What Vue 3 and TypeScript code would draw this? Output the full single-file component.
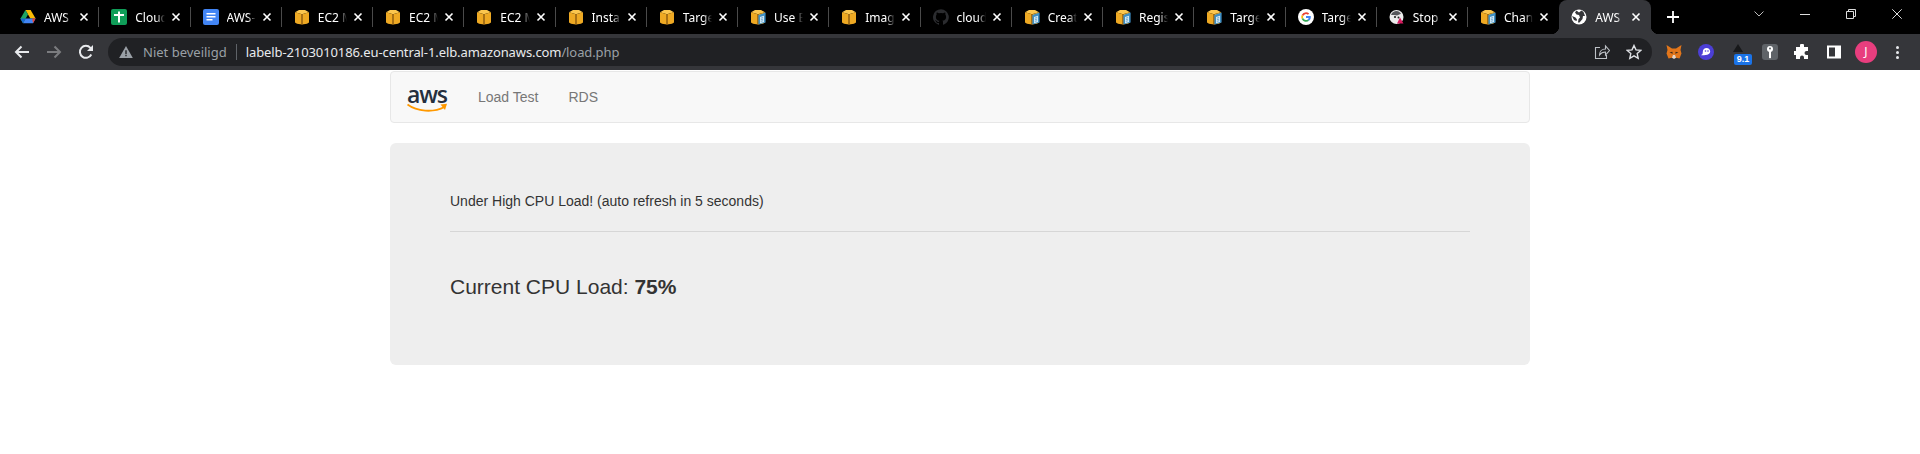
<template>
  <div class="page">
    <div class="tabstrip">
      <div class="tabs">
        <div
          v-for="(tab, i) in tabs"
          :key="i"
          :class="['tab', { 'tab--active': tab.active, 'tab--nosep': tab.active || tabs[i + 1]?.active }]"
        >
          <svg class="favicon" viewBox="0 0 16 16">
            <template v-if="tab.icon === 'drive'">
              <path d="M5.4 1h5.2l5 8.6h-5.2z" fill="#fbbc04" />
              <path d="M5.4 1L.4 9.7l2.6 4.6 5-8.700z" fill="#1fa463" />
              <path d="M3 14.3h10l2.6-4.700H5.600z" fill="#4285f4" />
              <path d="M3 14.3l2.6-4.700H.4z" fill="#1967d2" />
              <path d="M13 14.3l2.6-4.700h-3.400z" fill="#ea4335" />
            </template>
            <template v-else-if="tab.icon === 'sheets'">
              <rect width="16" height="16" rx="2" fill="#0f9d58" />
              <path d="M7 2.500h2v2.500h4v2H9v6.500H7V7H3V5h4z" fill="#fff" />
            </template>
            <template v-else-if="tab.icon === 'docs'">
              <rect width="16" height="16" rx="2" fill="#4285f4" />
              <path d="M3.500 4h9v1.400h-9zM3.500 7h9v1.400h-9zM3.500 10h6v1.400h-6z" fill="#fff" />
            </template>
            <template v-else-if="tab.icon === 'box' || tab.icon === 'boxdoc'">
              <path d="M1 3.200L5 1h6l4 2.200L8 5.200z" fill="#fbc64e" />
              <path d="M1 3.200L8 5.200V15.500L3 14.800 1 13.400z" fill="#eea923" />
              <path d="M15 3.200L8 5.200V15.500l5-.700 2-1.400z" fill="#eea923" />
              <path d="M7.300 5v10.500h1.400V5z" fill="#8a5a10" />
              <template v-if="tab.icon === 'boxdoc'">
                <path d="M8.400 6l7.200-2.400v9.800l-7.200 2.200z" fill="#3f8fc4" />
                <path d="M10 8l4-1.200v6.300L10 14.300z" fill="#d8edf8" />
                <path d="M10.800 9.200l2.400-.700M10.800 10.800l2.400-.700M10.800 12.400l2.400-.700" stroke="#4a8fc0" stroke-width=".7" />
              </template>
            </template>
            <template v-else-if="tab.icon === 'github'">
              <path
                d="M8 .2a8 8 0 0 0-2.500 15.600c.4.100.5-.2.5-.4v-1.400c-2.200.5-2.700-1-2.700-1-.4-.9-.9-1.200-.9-1.200-.7-.5.1-.5.1-.5.8.1 1.200.8 1.200.8.7 1.200 1.900.9 2.300.7.1-.5.3-.9.5-1.100-1.800-.2-3.600-.9-3.600-4 0-.9.3-1.600.8-2.100-.1-.2-.4-1 .1-2.100 0 0 .7-.2 2.200.8a7.500 7.500 0 0 1 4 0c1.500-1 2.200-.8 2.200-.8.4 1.100.2 1.900.1 2.100.5.6.8 1.300.8 2.100 0 3.100-1.900 3.700-3.700 3.900.3.3.6.8.6 1.500v2.200c0 .2.1.5.6.4A8 8 0 0 0 8 .2z"
                fill="#2b2c2f"
              />
            </template>
            <template v-else-if="tab.icon === 'google'">
              <circle cx="8" cy="8" r="8" fill="#fff" />
              <path d="M8 3.200a4.800 4.800 0 0 1 3.200 1.200L9.900 5.700A3 3 0 0 0 5.200 7L3.700 5.900A4.800 4.800 0 0 1 8 3.200z" fill="#ea4335" />
              <path d="M3.700 5.900L5.200 7a3 3 0 0 0 0 2L3.700 10.100a4.800 4.800 0 0 1 0-4.200z" fill="#fbbc05" />
              <path d="M5.200 9a3 3 0 0 0 4.500 1.500l1.400 1.200A4.800 4.800 0 0 1 3.700 10.100z" fill="#34a853" />
              <path d="M12.700 7.100H8v1.900h2.700c-.1.600-.5 1.100-1 1.500l1.400 1.200c.9-.8 1.700-2.100 1.700-3.700 0-.3 0-.6-.1-.9z" fill="#4285f4" />
            </template>
            <template v-else-if="tab.icon === 'stop'">
              <circle cx="7.500" cy="8" r="7" fill="#ececec" />
              <path d="M2 6c1-3 3.500-4 5.500-4s3.500 1.200 4.500 2.800L8 6.500 5 6z" fill="#55565a" />
              <circle cx="6" cy="8" r="1.100" fill="#222" />
              <circle cx="9.500" cy="8.500" r="1" fill="#222" />
              <path d="M11 8.500l3.500 6H8z" fill="#d81b60" />
            </template>
            <template v-else>
              <circle cx="8" cy="8" r="7.500" fill="#fff" />
              <path d="M5.500 1.500L4 3.500l1.500 2 2.500.5 1 2.500-1.500 1.500-.5 3.500h1.500l3-3.500.5-3h2L12.500 3l-2-1.500L8 3.500zM1 7l3.500 1.500L6 10.500 5.500 12 3 11z" fill="#35363a" />
            </template>
          </svg>
          <span class="tab-title">{{ tab.title }}</span>
          <svg class="tab-close" viewBox="0 0 10 10">
            <path d="M1.500 1.500l7 7M8.500 1.500l-7 7" stroke="#fff" stroke-width="1.600" />
          </svg>
        </div>
      </div>
      <svg class="new-tab" viewBox="0 0 12 12">
        <path d="M6 0v12M0 6h12" stroke="#fff" stroke-width="1.800" />
      </svg>
      <div class="window-controls">
        <svg class="win-icon" viewBox="0 0 10 6">
          <path d="M.5 .5L5 5 9.500 .5" fill="none" stroke="#bbb" />
        </svg>
        <svg class="win-icon" viewBox="0 0 10 10">
          <path d="M0 5.500h10" stroke="#ddd" />
        </svg>
        <svg class="win-icon" viewBox="0 0 10 10">
          <path d="M.5 2.500h7v7h-7zM2.500 2.500V.5h7v7h-2" fill="none" stroke="#ddd" />
        </svg>
        <svg class="win-icon" viewBox="0 0 10 10">
          <path d="M.3 .3l9.400 9.400M9.700 .3L.3 9.700" stroke="#ddd" />
        </svg>
      </div>
    </div>

    <div class="toolbar">
      <svg class="tool-icon" viewBox="0 0 16 16">
        <path d="M15 8H2M7.500 2.500L2 8l5.500 5.500" fill="none" stroke="#e8eaed" stroke-width="2" />
      </svg>
      <svg class="tool-icon tool-icon--next" viewBox="0 0 16 16">
        <path d="M1 8h13M8.500 2.500L14 8l-5.500 5.500" fill="none" stroke="#7b7c7f" stroke-width="2" />
      </svg>
      <svg class="tool-icon tool-icon--next" viewBox="0 0 16 16">
        <path d="M13.300 10.500A6 6 0 1 1 12.400 3.800L14 5.400" fill="none" stroke="#e8eaed" stroke-width="2" />
        <path d="M15 1v6H9z" fill="#e8eaed" />
      </svg>
      <div class="omnibox">
        <svg class="warn-icon" viewBox="0 0 16 14">
          <path d="M8 0l8 14H0z" fill="#9aa0a6" />
          <path d="M7.200 5h1.600v4.500H7.200zM7.200 10.500h1.600V12H7.200z" fill="#202124" />
        </svg>
        <span class="not-secure">Niet beveiligd</span>
        <span class="omni-sep"></span>
        <span class="url">labelb-2103010186.eu-central-1.elb.amazonaws.com<span class="url-path">/load.php</span></span>
        <svg class="omni-icon omni-icon--share" viewBox="0 0 16 16">
          <path d="M6 3.500H1.500v11h11V11M5.500 11c0-3.500 2.500-6 6-6V2l4 4.500-4 4.500V8c-2.500 0-4.500.8-6 3z" fill="none" stroke="#bdc1c6" stroke-width="1.100" />
        </svg>
        <svg class="omni-icon" viewBox="0 0 16 16">
          <path d="M8 1.500l2 4.400 4.800.5-3.600 3.200 1 4.700L8 11.900l-4.200 2.400 1-4.700L1.200 6.400 6 5.900z" fill="none" stroke="#dfe1e5" stroke-width="1.400" />
        </svg>
      </div>
      <div class="extensions">
        <svg class="ext" viewBox="0 0 16 16">
          <path d="M.5 1l5.500 3.500h4L15.500 1l-1 5 1 3.500-2 5-3.500-.8H6l-3.500.8-2-5 1-3.500z" fill="#e2761b" />
          <path d="M6 13.700l1-2.700h2l1 2.700-2 1.300z" fill="#e4d5c8" />
          <path d="M3.500 8.500l2.800-.8.5 2zM12.500 8.500l-2.800-.8-.5 2z" fill="#3a2a1d" />
        </svg>
        <svg class="ext" viewBox="0 0 16 16">
          <circle cx="8" cy="8" r="8" fill="#4c3fd6" />
          <path d="M2.800 11c1.500 0 2-1 2-3.300C4.800 5.500 6.500 4 8.500 4c2.200 0 3.700 1.600 3.700 3.500 0 2.300-2.200 3.500-4.700 3.500-1.500 0-3 .8-4.700 0z" fill="#fff" />
          <circle cx="7.500" cy="7" r=".8" fill="#4c3fd6" />
          <circle cx="10" cy="7" r=".8" fill="#4c3fd6" />
        </svg>
        <div class="ext-badge">
          <svg class="ext-badge-icon" viewBox="0 0 10 8"><path d="M5 0l5 8H0z" fill="#17181a" /></svg>
          <span class="ext-badge-text">9.1</span>
        </div>
        <svg class="ext" viewBox="0 0 16 16">
          <rect width="16" height="16" rx="3" fill="#5f6368" />
          <circle cx="8" cy="5" r="3" fill="#fff" />
          <circle cx="8" cy="4.500" r="1" fill="#5f6368" />
          <path d="M7 7h2v6.500L8 14.500l-1-1z" fill="#fff" />
        </svg>
        <svg class="ext" viewBox="0 0 16 16">
          <path d="M6 1.500a2 2 0 0 1 4 0V3h4v4h-1.500a2 2 0 0 0 0 4H14v4H10v-1.500a2 2 0 0 0-4 0V15H2v-4H.5a2 2 0 0 1 0-4H2V3h4z" fill="#fff" />
        </svg>
        <svg class="ext" viewBox="0 0 16 16">
          <path d="M1 1.500h14v13H1z" fill="#fff" />
          <path d="M3 3.500h6v9H3z" fill="#35363a" />
        </svg>
        <span class="avatar">J</span>
        <span class="kebab"><i></i><i></i><i></i></span>
      </div>
    </div>

    <div class="container">
      <nav class="navbar">
        <div class="brand">
          <span class="brand-word">aws</span>
          <svg class="brand-smile" viewBox="0 0 41 10">
            <path d="M.5 1.500C10 8.500 26 10 37.500 4" fill="none" stroke="#ff9900" stroke-width="1.800" />
            <path d="M33.500 1.500L40 .8 38 7z" fill="#ff9900" />
          </svg>
        </div>
        <a class="nav-link">Load Test</a>
        <a class="nav-link">RDS</a>
      </nav>
      <div class="jumbotron">
        <p class="status">Under High CPU Load! (auto refresh in 5 seconds)</p>
        <hr class="rule" />
        <p class="lead">Current CPU Load: <b>{{ load }}%</b></p>
      </div>
    </div>
  </div>
</template>

<script setup lang="ts">
import { ref } from 'vue'

type TabIcon = 'drive' | 'sheets' | 'docs' | 'box' | 'boxdoc' | 'github' | 'google' | 'stop' | 'globe'

interface Tab {
  title: string
  icon: TabIcon
  active?: boolean
}

const load = ref(75)

const tabs: Tab[] = [
  { title: 'AWS', icon: 'drive' },
  { title: 'Cloud', icon: 'sheets' },
  { title: 'AWS-', icon: 'docs' },
  { title: 'EC2 M', icon: 'box' },
  { title: 'EC2 M', icon: 'box' },
  { title: 'EC2 M', icon: 'box' },
  { title: 'Insta', icon: 'box' },
  { title: 'Targe', icon: 'box' },
  { title: 'Use E', icon: 'boxdoc' },
  { title: 'Imag', icon: 'box' },
  { title: 'cloud', icon: 'github' },
  { title: 'Creat', icon: 'boxdoc' },
  { title: 'Regis', icon: 'boxdoc' },
  { title: 'Targe', icon: 'boxdoc' },
  { title: 'Targe', icon: 'google' },
  { title: 'Stop', icon: 'stop' },
  { title: 'Chan', icon: 'boxdoc' },
  { title: 'AWS', icon: 'globe', active: true }
]
</script>

<style>
html,
body {
  margin: 0;
  background: #fff;
}
</style>

<style scoped>
.page {
  height: 454px;
  overflow: hidden;
  font-family: "Liberation Sans", Arial, sans-serif;
  font-size: 14px;
  color: #333;
}

.tabstrip {
  display: flex;
  height: 34px;
  background: #000;
}

.tabs {
  display: flex;
  flex: none;
  padding-left: 8px;
}

.tab {
  position: relative;
  display: flex;
  align-items: center;
  width: 91.25px;
  box-sizing: border-box;
  padding: 0 10px 0 12px;
  color: #fff;
  font-family: "Noto Sans", sans-serif;
  font-size: 12px;
}

.tab::after {
  content: '';
  position: absolute;
  right: 0;
  top: 7px;
  height: 20px;
  width: 1px;
  background: #4a4a4a;
}

.tab--nosep::after {
  display: none;
}

.tab--active {
  background: #35363a;
  border-radius: 8px 8px 0 0;
}

/* concave corners where the active tab meets the toolbar */
.tab--active::before,
.tab--active::after {
  content: '';
  display: block;
  position: absolute;
  top: auto;
  bottom: 0;
  width: 8px;
  height: 8px;
  background: radial-gradient(circle at 0 0, #000 8px, #35363a 8.5px);
}

.tab--active::before {
  right: auto;
  left: -8px;
  background: radial-gradient(circle at 0 0, #000 8px, #35363a 8.5px);
}

.tab--active::after {
  right: -8px;
  background: radial-gradient(circle at 100% 0, #000 8px, #35363a 8.5px);
}

.favicon {
  width: 16px;
  height: 16px;
  flex: none;
  margin-right: 8px;
}

.tab-title {
  flex: 1;
  min-width: 0;
  overflow: hidden;
  white-space: nowrap;
  -webkit-mask-image: linear-gradient(to right, #000 70%, transparent);
  mask-image: linear-gradient(to right, #000 70%, transparent);
}

.tab-close {
  width: 10px;
  height: 10px;
  flex: none;
  margin-left: 6px;
}

.new-tab {
  width: 12px;
  height: 12px;
  flex: none;
  margin: 11px 0 0 16px;
}

.window-controls {
  display: flex;
  flex: 1;
  justify-content: flex-end;
  gap: 36px;
  padding-right: 18px;
}

.win-icon {
  width: 10px;
  height: 10px;
  margin-top: 9px;
}

.toolbar {
  display: flex;
  align-items: center;
  height: 36px;
  background: #35363a;
}

.tool-icon {
  width: 16px;
  height: 16px;
  margin-left: 14px;
  flex: none;
}

.tool-icon--next {
  margin-left: 16px;
}

.omnibox {
  display: flex;
  align-items: center;
  width: 1544px;
  height: 28px;
  margin-left: 14px;
  padding-left: 11px;
  box-sizing: border-box;
  background: #202124;
  border-radius: 14px;
  font-family: "Noto Sans", sans-serif;
  font-size: 13px;
}

.warn-icon {
  width: 14px;
  height: 12px;
  flex: none;
}

.not-secure {
  margin-left: 10px;
  color: #9aa0a6;
  white-space: nowrap;
}

.omni-sep {
  width: 1px;
  height: 16px;
  margin: 0 9px;
  background: #5f6368;
}

.url {
  flex: 1;
  color: #e8eaed;
  font-size: 13px;
  letter-spacing: -0.1px;
  white-space: nowrap;
}

.url-path {
  color: #9aa0a6;
}

.omni-icon {
  width: 16px;
  height: 16px;
  margin-right: 10px;
  flex: none;
}

.omni-icon--share {
  margin-right: 16px;
}

.extensions {
  display: flex;
  align-items: center;
  flex: 1;
  padding-left: 14px;
  gap: 16px;
}

.ext {
  width: 16px;
  height: 16px;
  flex: none;
}

.ext-badge {
  position: relative;
  width: 16px;
  height: 16px;
  flex: none;
}

.ext-badge-icon {
  position: absolute;
  left: 3px;
  top: 0;
  width: 10px;
  height: 8px;
}

.ext-badge-text {
  position: absolute;
  left: 4px;
  top: 10px;
  width: 18px;
  height: 11px;
  background: #1a73e8;
  border-radius: 2px;
  color: #fff;
  font: bold 9px/11px "Liberation Sans", sans-serif;
  text-align: center;
}

.avatar {
  width: 22px;
  height: 22px;
  margin-left: -3px;
  border-radius: 50%;
  background: #e83e7e;
  color: #fff;
  font: 12px/22px "Noto Sans", sans-serif;
  text-align: center;
  flex: none;
}

.kebab {
  display: flex;
  flex-direction: column;
  gap: 2px;
  margin-left: 3px;
}

.kebab i {
  width: 3px;
  height: 3px;
  border-radius: 50%;
  background: #e8eaed;
}

.container {
  width: 1140px;
  margin: 1px auto 0;
}

.navbar {
  display: flex;
  align-items: center;
  height: 50px;
  background: #f8f8f8;
  border: 1px solid #e7e7e7;
  border-radius: 4px;
  margin-bottom: 20px;
}

.brand {
  display: flex;
  flex-direction: column;
  align-items: flex-start;
  width: 41px;
  margin: 5px 15px 0 16px;
}

.brand-word {
  height: 16px;
  color: #252f3e;
  font: 600 23px/14px "Open Sans", sans-serif;
  letter-spacing: -1.2px;
}

.brand-smile {
  width: 41px;
  height: 10px;
}

.nav-link {
  padding: 0 15px;
  color: #777;
  line-height: 20px;
}

.jumbotron {
  height: 222px;
  box-sizing: border-box;
  padding: 48px 60px;
  background: #eee;
  border-radius: 6px;
}

.status {
  margin: 0;
  line-height: 20px;
}

.rule {
  height: 0;
  margin: 20px 0 40px;
  border: 0;
  border-top: 1px solid #d6d6d6;
}

.lead {
  margin: 0;
  font-size: 21px;
  line-height: 30px;
}
</style>
